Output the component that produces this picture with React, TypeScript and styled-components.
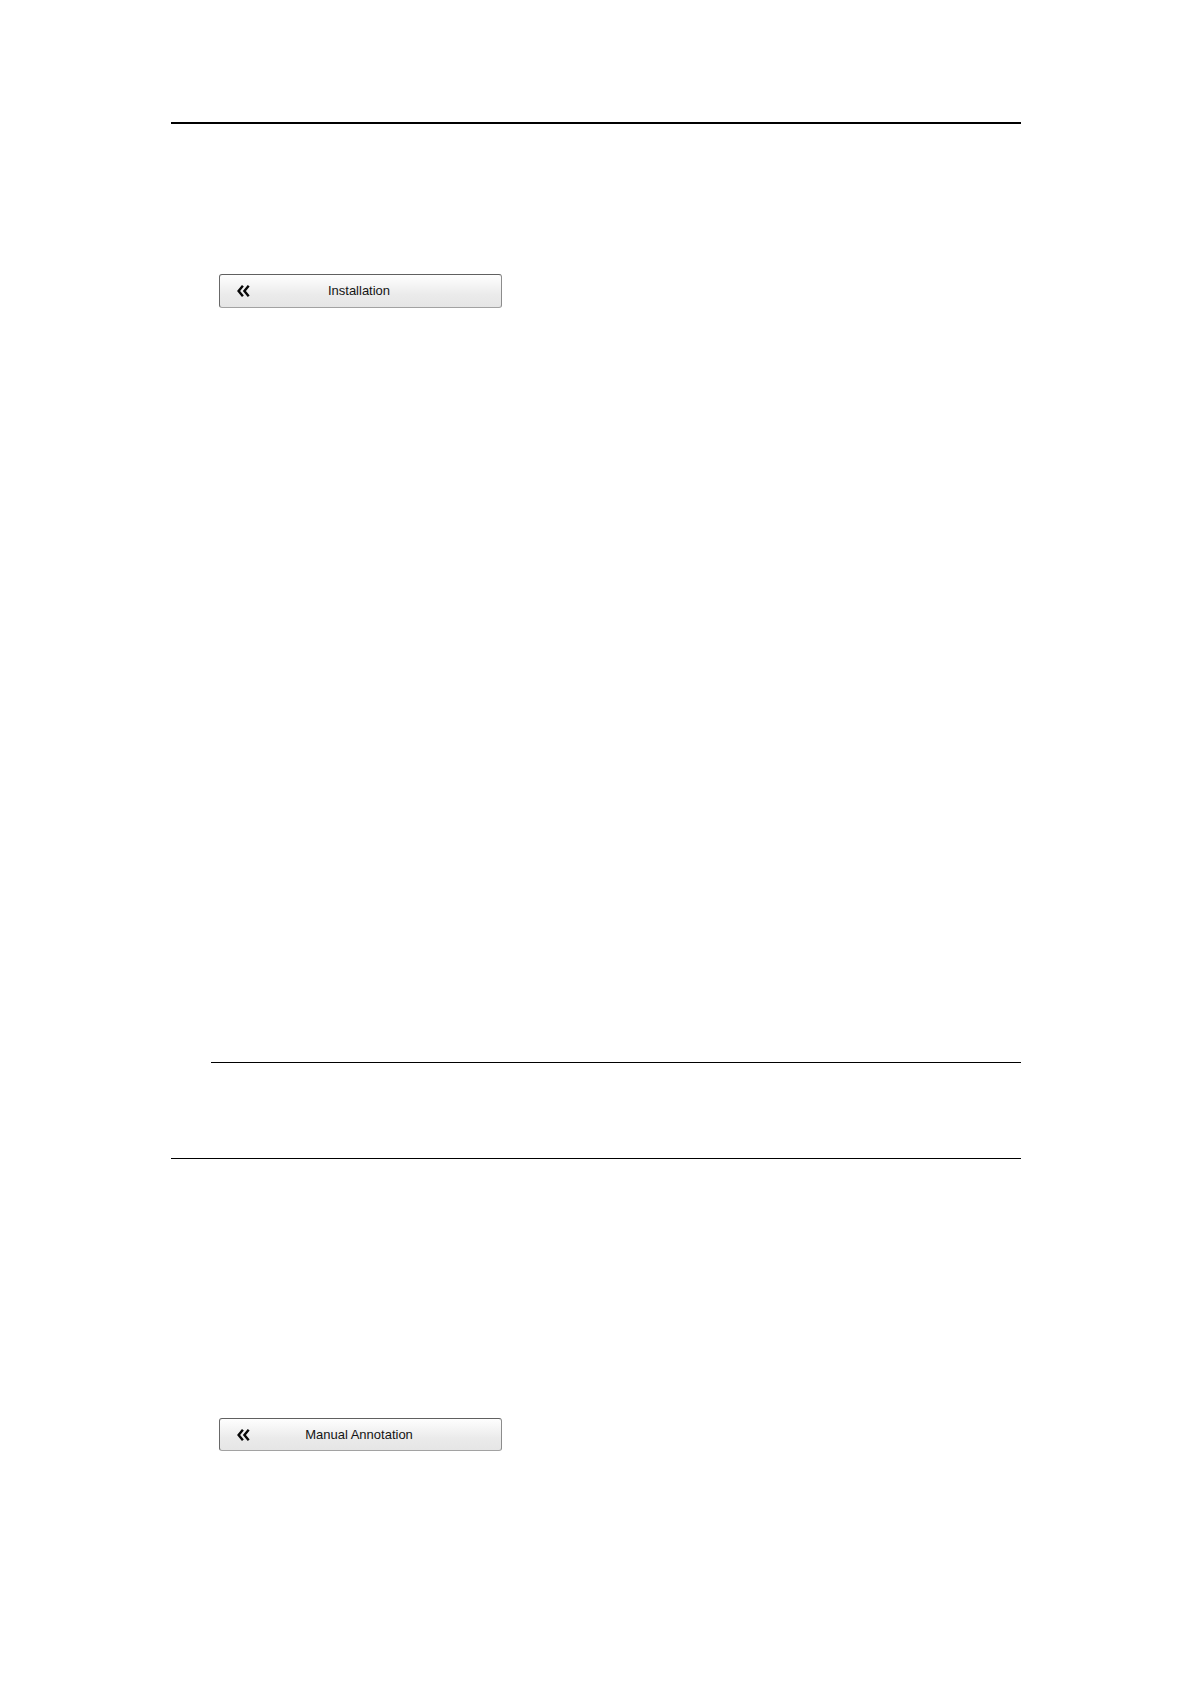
import React from "react";
import styled, { createGlobalStyle } from "styled-components";

const GlobalStyle = createGlobalStyle`
  * {
    box-sizing: border-box;
  }
  body {
    margin: 0;
    background: #ffffff;
    font-family: "Liberation Sans", Arial, sans-serif;
  }
`;

const Page = styled.main`
  display: flex;
  flex-direction: column;
  min-height: 100vh;
  padding: 122px 170px 233px 171px;
`;

const Rule = styled.hr<{ $weight: number; $indent?: number }>`
  width: auto;
  align-self: stretch;
  height: ${({ $weight }) => $weight}px;
  margin: 0 0 0 ${({ $indent = 0 }) => $indent}px;
  border: 0;
  background: #000000;
`;

const Section = styled.section<{ $top: number; $bottom: number }>`
  padding: ${({ $top, $bottom }) => `${$top}px 0 ${$bottom}px 48px`};
`;

const Note = styled.div`
  height: 95px;
`;

const MenuButton = styled.button<{ $height: number }>`
  display: grid;
  grid-template-columns: 13px 1fr 13px;
  align-items: center;
  width: 283px;
  max-width: 100%;
  height: ${({ $height }) => $height}px;
  padding: 0 20px 0 17px;
  border: 1px solid;
  border-color: #606060 #8c8c8c #a2a2a2 #686868;
  border-radius: 3px;
  background: linear-gradient(#ffffff 0%, #f7f7f7 25%, #ebebeb 60%, #e5e5e5 100%) border-box;
  color: #141414;
  font-family: inherit;
  font-size: 13px;
  line-height: 16px;
  text-align: center;
  cursor: pointer;
`;

const BackIcon = () => (
  <svg width="13" height="12" viewBox="0 0 13 12" fill="none" aria-hidden="true">
    <path
      d="M5.9 0.8 L1.6 6 L5.9 11.2 M11.7 0.8 L7.4 6 L11.7 11.2"
      stroke="#080808"
      strokeWidth="2.4"
    />
  </svg>
);

type BackButtonProps = { label: string; height: number };

const BackButton = ({ label, height }: BackButtonProps) => (
  <MenuButton type="button" $height={height}>
    <BackIcon />
    <span>{label}</span>
  </MenuButton>
);

export default function App() {
  return (
    <>
      <GlobalStyle />
      <Page>
        <Rule $weight={2} />
        <Section $top={150} $bottom={754}>
          <BackButton label="Installation" height={34} />
        </Section>
        <Rule $weight={1} $indent={40} />
        <Note />
        <Rule $weight={1} />
        <Section $top={259} $bottom={0}>
          <BackButton label="Manual Annotation" height={33} />
        </Section>
      </Page>
    </>
  );
}
